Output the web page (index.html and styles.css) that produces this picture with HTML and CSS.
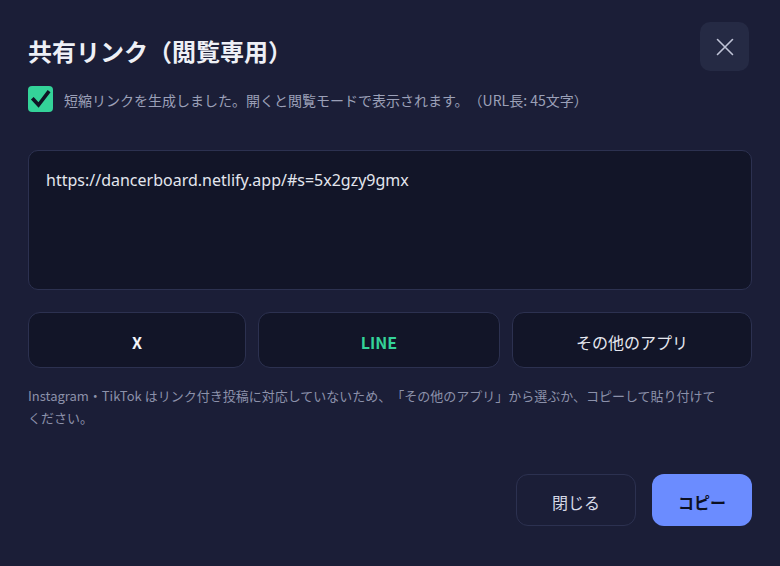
FILE: index.html
```html
<!DOCTYPE html>
<html lang="ja">
<head>
<meta charset="utf-8">
<title>共有リンク（閲覧専用）</title>
<link rel="stylesheet" href="styles.css">
</head>
<body>
<div class="dialog">
  <div class="header">
    <h1 class="title">共有リンク（閲覧専用）</h1>
    <button class="close" aria-label="閉じる">
      <svg width="20" height="20" viewBox="0 0 20 20"><path d="M2.5 2.5 L17.5 17.5 M17.5 2.5 L2.5 17.5" stroke="#bfc3d6" stroke-width="1.6" stroke-linecap="round" fill="none"/></svg>
    </button>
  </div>
  <div class="status">
    <svg class="check" width="25" height="26" viewBox="0 0 25 26"><rect x="0" y="0" width="25" height="26" rx="4" fill="#34d399"/><path d="M5.5 13.5 L10.5 19 L20 6.5" stroke="#101425" stroke-width="3.6" stroke-linecap="square" stroke-linejoin="miter" fill="none"/></svg>
    <span class="status-text">短縮リンクを生成しました。開くと閲覧モードで表示されます。（URL長: 45文字）</span>
  </div>
  <div class="urlbox">https://dancerboard.netlify.app/#s=5x2gzy9gmx</div>
  <div class="shares">
    <button class="share share-x">X</button>
    <button class="share share-line">LINE</button>
    <button class="share share-other">その他のアプリ</button>
  </div>
  <p class="note">Instagram・TikTok はリンク付き投稿に対応していないため、「その他のアプリ」から選ぶか、コピーして貼り付けてください。</p>
  <div class="footer">
    <button class="btn btn-close">閉じる</button>
    <button class="btn btn-copy">コピー</button>
  </div>
</div>
</body>
</html>
```
FILE: styles.css
```css
html, body {
  margin: 0;
  padding: 0;
  background: #1b1e37;
  width: 780px;
  height: 566px;
  overflow: hidden;
}
body {
  font-family: "Noto Sans CJK JP", "Noto Sans", sans-serif;
  color: #e6e8f0;
  text-spacing-trim: space-all;
}
.dialog {
  padding: 22px 28px 0 28px;
}
.header {
  display: flex;
  justify-content: space-between;
  align-items: flex-start;
}
.title {
  margin: 13px 0 0 0;
  font-size: 24px;
  line-height: 32px;
  font-weight: 700;
  color: #eef0f6;
}
.close {
  width: 49px;
  height: 49px;
  margin-right: 3px;
  border: none;
  border-radius: 10px;
  background: #252a44;
  display: flex;
  align-items: center;
  justify-content: center;
  padding: 0;
}
.status {
  display: flex;
  align-items: center;
  gap: 11px;
  margin-top: 15px;
}
.check {
  display: block;
  flex: none;
}
.status-text {
  font-size: 14px;
  line-height: 20px;
  color: #9ba0b8;
  padding-top: 2px;
}
.urlbox {
  margin-top: 38px;
  height: 140px;
  box-sizing: border-box;
  border: 1px solid #2c3150;
  border-radius: 10px;
  background: #121528;
  padding: 17px 17px;
  font-family: "Noto Sans", sans-serif;
  font-size: 16px;
  line-height: 24px;
  color: #e3e6ee;
}
.shares {
  margin-top: 22px;
  display: grid;
  grid-template-columns: 218fr 242fr 240fr;
  gap: 12px;
}
.share {
  height: 56px;
  box-sizing: border-box;
  border: 1px solid #2c3150;
  border-radius: 12px;
  background: #121528;
  font-family: "Noto Sans CJK JP", "Noto Sans", sans-serif;
  font-size: 16px;
  color: #e6e8f0;
  padding: 4px 0 0 0;
  text-spacing-trim: space-all;
}
.share-x {
  font-weight: 700;
  color: #f2f3f8;
}
.share-line {
  font-weight: 700;
  color: #34d399;
}
.share-other {
  font-weight: 400;
}
.note {
  margin: 17px 30px 0 0;
  font-size: 13px;
  line-height: 22px;
  color: #8c91aa;
}
.footer {
  margin-top: 45px;
  display: flex;
  justify-content: flex-end;
  gap: 16px;
}
.btn {
  height: 52px;
  border-radius: 12px;
  font-family: "Noto Sans CJK JP", "Noto Sans", sans-serif;
  font-size: 16px;
  box-sizing: border-box;
  padding: 3px 0 0 0;
  text-spacing-trim: space-all;
}
.btn-close {
  width: 120px;
  background: transparent;
  border: 1px solid #2c3150;
  color: #d6d9e6;
}
.btn-copy {
  width: 100px;
  background: #6b8cff;
  border: none;
  color: #0c1022;
  font-weight: 700;
}
```
